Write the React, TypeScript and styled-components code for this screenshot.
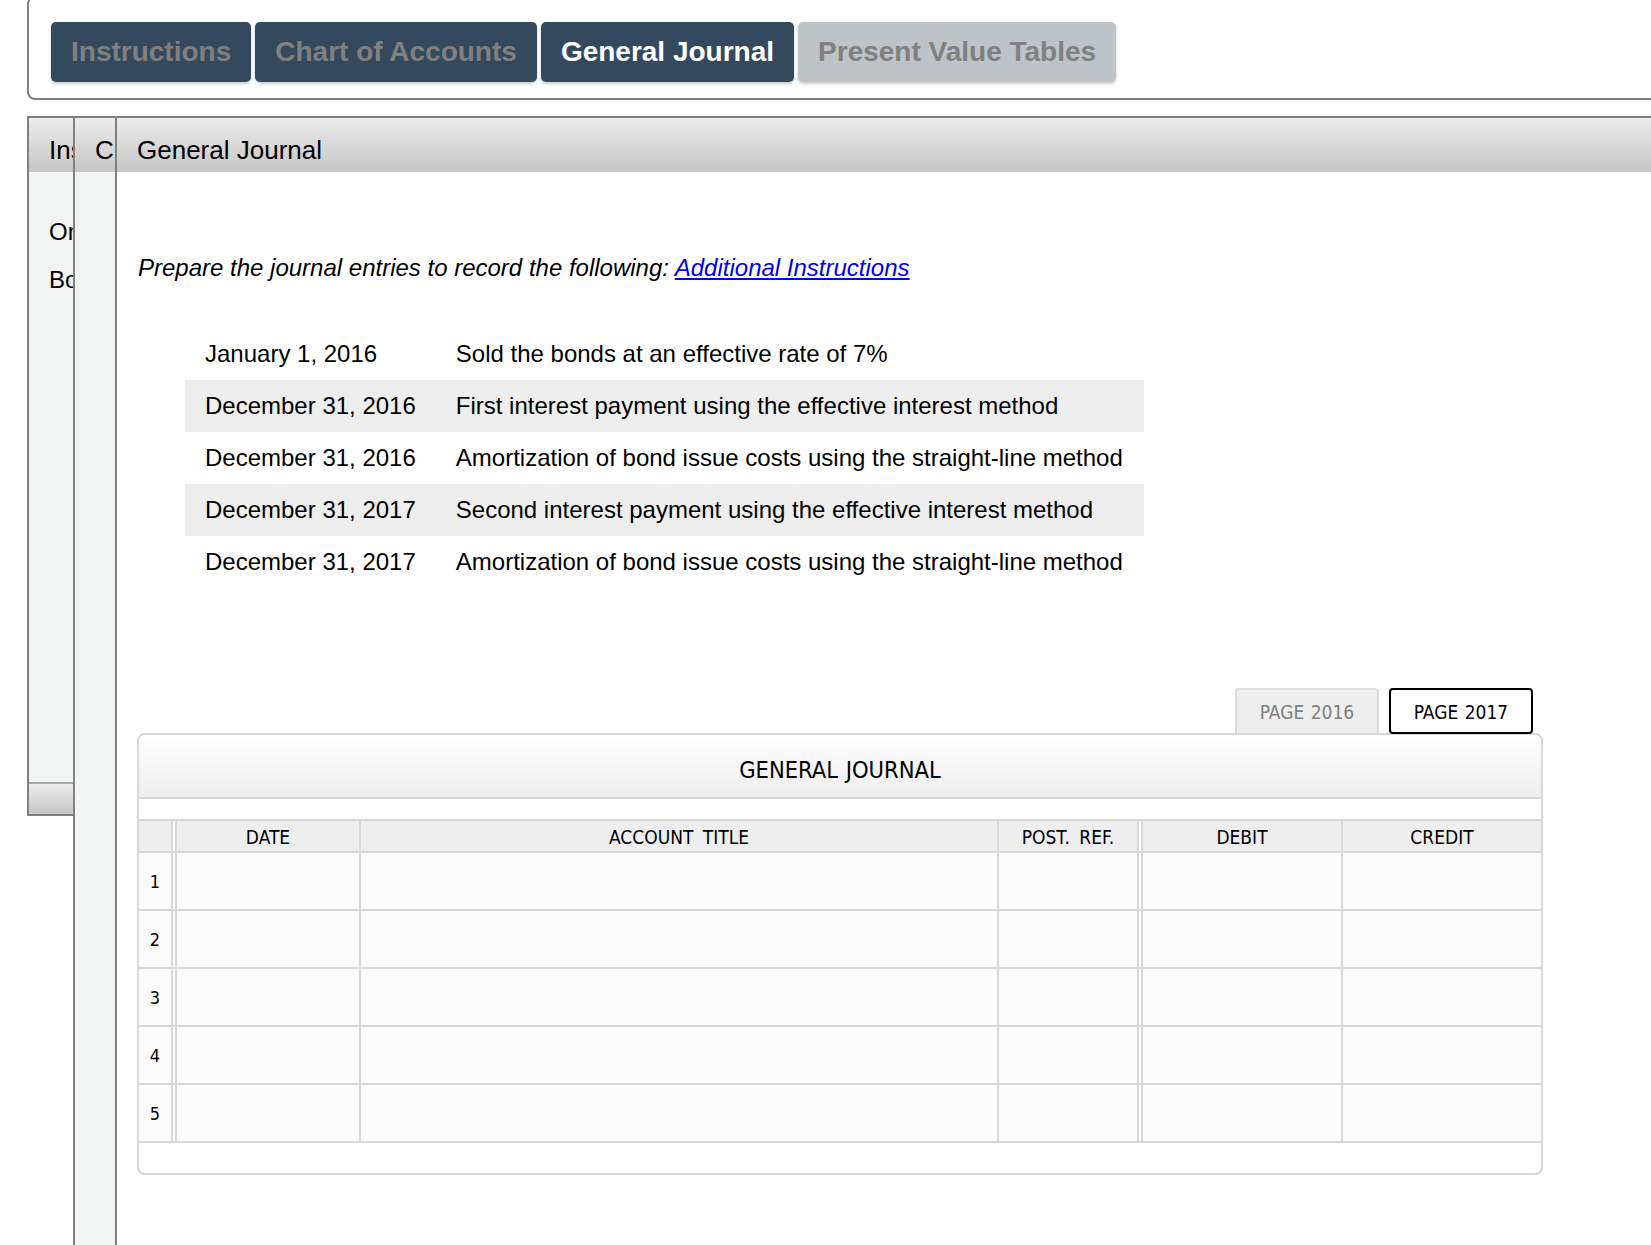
import React from "react";
import styled, { createGlobalStyle } from "styled-components";

const Global = createGlobalStyle`
  html, body { margin: 0; padding: 0; background: #fff; overflow: hidden; }
  body { font-family: "Liberation Sans", Arial, sans-serif; color: #000; }
  * { box-sizing: border-box; }
`;

const Page = styled.div`
  width: 1651px;
  height: 1245px;
  overflow: hidden;
  padding-left: 27px;
`;

const NavPanel = styled.nav`
  width: 1660px;
  height: 104px;
  margin-top: -4px;
  padding: 24px 0 0 22px;
  border: 2px solid #808080;
  border-radius: 8px;
  display: flex;
  gap: 4px;
`;

const NavButton = styled.div<{ $state: "idle" | "active" | "disabled" }>`
  height: 60px;
  padding: 0 20px;
  display: flex;
  align-items: center;
  border-radius: 5px;
  font-size: 28px;
  font-weight: 700;
  white-space: nowrap;
  box-shadow: 0 2px 3px rgba(0, 0, 0, 0.2);
  background: ${(p) => (p.$state === "disabled" ? "#bdc3c7" : "#34495e")};
  color: ${(p) => (p.$state === "active" ? "#ffffff" : "#808080")};
`;

const Stack = styled.div`
  display: flex;
  align-items: flex-start;
  margin-top: 16px;
  width: 1640px;
`;

const Pane = styled.section<{ $width?: number; $height?: number }>`
  flex: ${(p) => (p.$width ? `0 0 ${p.$width}px` : "1 1 auto")};
  height: ${(p) => (p.$height ? `${p.$height}px` : "1140px")};
  border-left: 2px solid #808080;
  border-top: 2px solid #808080;
  overflow: hidden;
  display: flex;
  flex-direction: column;
  white-space: nowrap;
  background: #fff;
`;

const PaneHeader = styled.header<{ $pad: number }>`
  flex: 0 0 54px;
  padding: 11px 0 0 ${(p) => p.$pad}px;
  font-size: 26px;
  line-height: 43px;
  background: linear-gradient(#ececec, #c6c6c6);
`;

const SideBody = styled.div`
  flex: 1 1 auto;
  background: #f2f4f3;
  padding: 46px 0 0 20px;
`;

const SideLine = styled.p`
  margin: 0 0 20px;
  font-size: 24px;
  line-height: 28px;
`;

const PaneFooter = styled.footer`
  flex: 0 0 32px;
  border-top: 2px solid #a8a8a8;
  background: linear-gradient(#ececec, #c6c6c6);
`;

const ClosedPane = styled(Pane)`
  border-bottom: 2px solid #808080;
`;

const MainBody = styled.div`
  padding: 82px 0 0 21px;
`;

const Prompt = styled.p`
  margin: 0;
  font-size: 24px;
  line-height: 28px;
  font-style: italic;
`;

const PromptLink = styled.a`
  color: #0000ee;
  text-decoration: underline;
`;

const Schedule = styled.table`
  margin: 46px 0 0 47px;
  border-collapse: collapse;
  font-size: 24px;
`;

const ScheduleRow = styled.tr`
  height: 52px;
  &:nth-child(even) { background: #eeeeee; }
`;

const ScheduleCell = styled.td`
  padding: 0 20px;
  &:last-child { padding-right: 21px; }
`;

const TabRow = styled.div`
  width: 1404px;
  margin-top: 100px;
  padding-right: 9px;
  display: flex;
  justify-content: flex-end;
  gap: 10px;
`;

const jFont = `"DejaVu Sans Condensed", "DejaVu Sans", sans-serif`;

const PageTab = styled.div<{ $active?: boolean }>`
  width: 144px;
  height: ${(p) => (p.$active ? 46 : 45)}px;
  margin-bottom: ${(p) => (p.$active ? -1 : 0)}px;
  padding-top: 1px;
  display: flex;
  align-items: center;
  justify-content: center;
  position: relative;
  font-family: ${jFont};
  font-size: 19px;
  word-spacing: 1px;
  border: 2px solid ${(p) => (p.$active ? "#000" : "#dcdcdc")};
  border-bottom: ${(p) => (p.$active ? "2px solid #000" : "none")};
  border-radius: ${(p) => (p.$active ? "4px" : "4px 4px 0 0")};
  background: ${(p) => (p.$active ? "#fff" : "#eeeeee")};
  color: ${(p) => (p.$active ? "#000" : "#808080")};
`;

const JournalCard = styled.div`
  width: 1406px;
  height: 442px;
  margin-left: -1px;
  border: 2px solid #d8d8d8;
  border-radius: 8px;
  overflow: hidden;
  font-family: ${jFont};
`;

const JournalTitle = styled.div`
  height: 64px;
  padding-top: 7px;
  border-bottom: 2px solid #d8d8d8;
  background: linear-gradient(#ffffff, #eeeeee);
  display: flex;
  align-items: center;
  justify-content: center;
  font-size: 23.5px;
  word-spacing: 1px;
`;

const JournalGrid = styled.div`
  margin-top: 20px;
  border-top: 2px solid #d8d8d8;
  background: #fff;
`;

const GridRow = styled.div<{ $head?: boolean }>`
  display: grid;
  grid-template-columns: 38px 184px 638px 144px 200px 1fr;
  height: ${(p) => (p.$head ? 32 : 58)}px;
  border-bottom: 2px solid #d8d8d8;
`;

const GridCell = styled.div<{ $head?: boolean; $double?: boolean; $last?: boolean }>`
  display: flex;
  align-items: center;
  justify-content: center;
  padding-top: ${(p) => (p.$head ? 1 : 0)}px;
  background-color: ${(p) => (p.$head ? "#eeeeee" : "#fcfcfc")};
  background-clip: padding-box;
  font-size: ${(p) => (p.$head ? "19px" : "18px")};
  word-spacing: 4px;
  border-right: ${(p) =>
    p.$last ? "none" : p.$double ? "6px double #d8d8d8" : "2px solid #d8d8d8"};
`;

const columns = ["", "DATE", "ACCOUNT TITLE", "POST. REF.", "DEBIT", "CREDIT"];

const entries: [string, string][] = [
  ["January 1, 2016", "Sold the bonds at an effective rate of 7%"],
  ["December 31, 2016", "First interest payment using the effective interest method"],
  ["December 31, 2016", "Amortization of bond issue costs using the straight-line method"],
  ["December 31, 2017", "Second interest payment using the effective interest method"],
  ["December 31, 2017", "Amortization of bond issue costs using the straight-line method"],
];

export default function App() {
  return (
    <Page>
      <Global />
      <NavPanel>
        <NavButton $state="idle">Instructions</NavButton>
        <NavButton $state="idle">Chart of Accounts</NavButton>
        <NavButton $state="active">General Journal</NavButton>
        <NavButton $state="disabled">Present Value Tables</NavButton>
      </NavPanel>
      <Stack>
        <ClosedPane $width={46} $height={700}>
          <PaneHeader $pad={20}>Instructions</PaneHeader>
          <SideBody>
            <SideLine>On January 1, 2016</SideLine>
            <SideLine>Bonds</SideLine>
          </SideBody>
          <PaneFooter />
        </ClosedPane>
        <Pane $width={42}>
          <PaneHeader $pad={20}>Chart of Accounts</PaneHeader>
          <SideBody />
        </Pane>
        <Pane>
          <PaneHeader $pad={20}>General Journal</PaneHeader>
          <MainBody>
            <Prompt>
              Prepare the journal entries to record the following:{" "}
              <PromptLink href="#">Additional Instructions</PromptLink>
            </Prompt>
            <Schedule>
              <tbody>
                {entries.map(([date, text], i) => (
                  <ScheduleRow key={i}>
                    <ScheduleCell>{date}</ScheduleCell>
                    <ScheduleCell>{text}</ScheduleCell>
                  </ScheduleRow>
                ))}
              </tbody>
            </Schedule>
            <TabRow>
              <PageTab>PAGE 2016</PageTab>
              <PageTab $active>PAGE 2017</PageTab>
            </TabRow>
            <JournalCard>
              <JournalTitle>GENERAL JOURNAL</JournalTitle>
              <JournalGrid>
                <GridRow $head>
                  {columns.map((c, i) => (
                    <GridCell key={i} $head $double={i === 0 || i === 3} $last={i === 5}>
                      {c}
                    </GridCell>
                  ))}
                </GridRow>
                {[1, 2, 3, 4, 5].map((n) => (
                  <GridRow key={n}>
                    {columns.map((_, i) => (
                      <GridCell key={i} $double={i === 0 || i === 3} $last={i === 5}>
                        {i === 0 ? n : ""}
                      </GridCell>
                    ))}
                  </GridRow>
                ))}
              </JournalGrid>
            </JournalCard>
          </MainBody>
        </Pane>
      </Stack>
    </Page>
  );
}
